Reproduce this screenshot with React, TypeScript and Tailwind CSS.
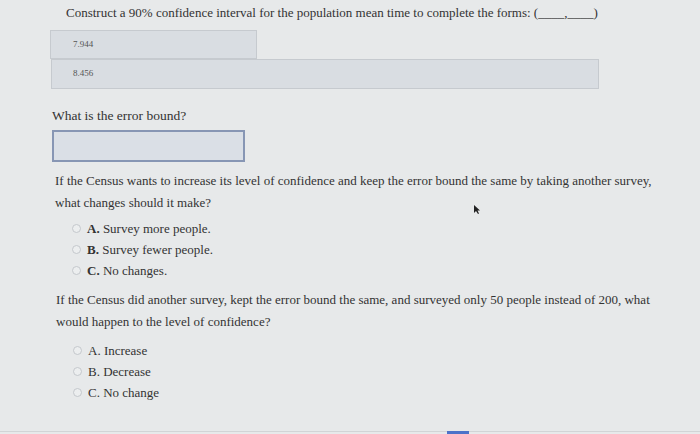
import React from 'react';

function Radio() {
  return <span className="inline-block w-[9px] h-[9px] rounded-full border border-[#c4c8cc] bg-[#eceeef] shrink-0" />;
}

function Choice({ letter, text, bold = true }: { letter: string; text: string; bold?: boolean }) {
  return (
    <div className="flex items-center h-[21px]">
      <Radio />
      <span className="ml-[6px]">
        <span className={bold ? 'font-bold' : ''}>{letter}.</span> {text}
      </span>
    </div>
  );
}

export default function App() {
  return (
    <div className="w-[700px] h-[434px] overflow-hidden bg-[#e7e9ea] text-[#333] relative font-['Liberation_Serif','Times_New_Roman',serif]">
      <div className="pt-[4px] pl-[66px] text-[13px] leading-[18px]">
        Construct a 90% confidence interval for the population mean time to complete the forms: (____,____)
      </div>

      {/* answer boxes */}
      <div className="ml-[50px] mt-[8px] w-[207px] h-[29px] bg-[#d9dde2] border border-[#c6cacf] flex items-center pl-[22px] text-[9px] text-[#555]">
        7.944
      </div>
      <div className="ml-[51px] w-[548px] h-[30px] bg-[#d9dde2] border border-[#c6cacf] flex items-center pl-[21px] text-[9px] text-[#555]">
        8.456
      </div>

      <div className="pl-[52px] mt-[18px] text-[13.5px] leading-[18px]">What is the error bound?</div>
      <div className="ml-[52px] mt-[5px] w-[193px] h-[32px] bg-[#dadfe6] border-2 border-[#8796b4]" />

      <div className="pl-[55px] pr-[20px] mt-[8px] text-[13px] leading-[22px]">
        <p>If the Census wants to increase its level of confidence and keep the error bound the same by taking another survey,</p>
        <p>what changes should it make?</p>
        <div className="pl-[17px] mt-[4px]">
          <Choice letter="A" text="Survey more people." />
          <Choice letter="B" text="Survey fewer people." />
          <Choice letter="C" text="No changes." />
        </div>
      </div>

      <div className="pl-[56px] pr-[20px] mt-[8px] text-[13px] leading-[22px]">
        <p>If the Census did another survey, kept the error bound the same, and surveyed only 50 people instead of 200, what</p>
        <p>would happen to the level of confidence?</p>
        <div className="pl-[17px] mt-[7px]">
          <Choice letter="A" text="Increase" bold={false} />
          <Choice letter="B" text="Decrease" bold={false} />
          <Choice letter="C" text="No change" bold={false} />
        </div>
      </div>

      {/* mouse cursor */}
      <svg className="absolute left-[473px] top-[204px]" width="8" height="11" viewBox="0 0 8 11">
        <path d="M1 1 L1 9 L3 7 L5 10 L6 9.5 L4.5 6.5 L7 6.5 Z" fill="#222" />
      </svg>

      <div className="absolute left-0 right-0 bottom-[2px] border-t border-[#d2d4d6]" />
      <div className="absolute left-[447px] bottom-0 w-[22px] h-[3px] bg-[#4c72c9]" />
    </div>
  );
}
